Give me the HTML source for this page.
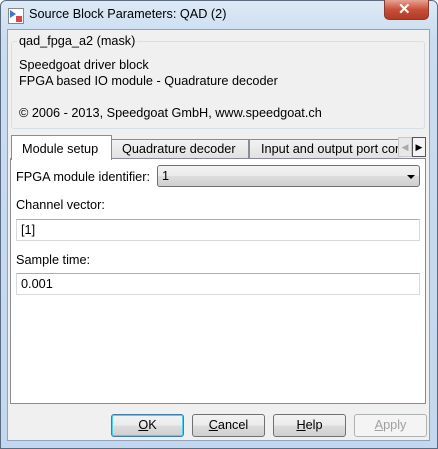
<!DOCTYPE html><html><head><style>
*{margin:0;padding:0;box-sizing:border-box}
body{width:438px;height:449px;overflow:hidden;background:#fff;font-family:"Liberation Sans",sans-serif;font-size:12.7px;color:#000;position:relative}
.win{position:absolute;left:0;top:0;width:438px;height:449px;border:1px solid #5b6b80;border-radius:6px 6px 0 0;background:linear-gradient(#dde9f6,#c9dcf0 40px,#c3d7ee)}
.client{position:absolute;left:7px;top:29px;width:423px;height:412px;background:#f0f0f0;border:1px solid #8fa3bc}
.abs{position:absolute}
.t{position:absolute;white-space:nowrap}
.btn{position:absolute;top:414px;width:73px;height:23px;border:1px solid #707070;border-radius:3px;background:linear-gradient(#f2f2f2,#ebebeb 50%,#dddddd 51%,#cfcfcf);text-align:center;line-height:21px}
.inp{position:absolute;left:16px;width:404px;height:22px;border:1px solid #d9d9d9;border-top-color:#abadb3;background:#fff;padding-left:4px;line-height:20px}
</style></head><body>
<div class="win"></div>
<div class="abs" style="left:8px;top:8px;width:16px;height:16px;border:1px solid #888;background:#fff"></div>
<div class="abs" style="left:10px;top:10px;width:0;height:0;border-left:6px solid #3a7cc7;border-top:4px solid transparent;border-bottom:4px solid transparent"></div>
<div class="abs" style="left:16px;top:16px;width:6px;height:6px;background:#d44"></div>
<div class="t" style="left:29px;top:7px">Source Block Parameters: QAD (2)</div>
<div class="abs" style="left:384px;top:0;width:45px;height:20px;border:1px solid #8a3b30;border-top:none;border-radius:0 0 5px 5px;background:linear-gradient(#e8a393,#c7503a 50%,#b33a22)"></div>
<div class="t" style="left:398px;top:0;color:#fff;font-weight:bold;font-size:15px">✕</div>
<div class="client"></div>
<div class="abs" style="left:11px;top:41px;width:414px;height:88px;border:1px solid #d5dfe5;border-radius:3px"></div>
<div class="t" style="left:17px;top:34px;background:#f0f0f0;padding:0 2px">qad_fpga_a2 (mask)</div>
<div class="t" style="left:19px;top:58px">Speedgoat driver block</div>
<div class="t" style="left:19px;top:74px">FPGA based IO module - Quadrature decoder</div>
<div class="t" style="left:19px;top:106px">© 2006 - 2013, Speedgoat GmbH, www.speedgoat.ch</div>
<div class="abs" style="left:10px;top:158px;width:416px;height:246px;background:#fff;border:1px solid #898c95"></div>
<div class="abs" style="left:111px;top:139px;width:138px;height:20px;border:1px solid #898c95;background:linear-gradient(#f2f2f2,#e1e1e1)"></div>
<div class="t" style="left:122px;top:142px">Quadrature decoder</div>
<div class="abs" style="left:249px;top:139px;width:152px;height:20px;border:1px solid #898c95;border-right:none;background:linear-gradient(#f2f2f2,#e1e1e1);overflow:hidden"><span class="t" style="left:11px;top:2px">Input and output port conf</span></div>
<div class="abs" style="left:398px;top:137px;width:14px;height:20px;background:#e8e8e8;border:1px solid #c8c8c8;color:#aaa;font-size:9px;text-align:center;line-height:18px">◀</div>
<div class="abs" style="left:412px;top:137px;width:14px;height:20px;background:#f4f4f4;border:1px solid #555;font-size:9px;text-align:center;line-height:18px">▶</div>
<div class="abs" style="left:11px;top:135px;width:101px;height:25px;border:1px solid #898c95;border-bottom:none;background:#fff"></div>
<div class="t" style="left:22px;top:142px">Module setup</div>
<div class="t" style="left:16px;top:170px">FPGA module identifier:</div>
<div class="abs" style="left:157px;top:165px;width:263px;height:22px;border:1px solid #707070;border-radius:3px;background:linear-gradient(#f2f2f2,#ebebeb 50%,#dddddd 51%,#cfcfcf)"></div>
<div class="t" style="left:162px;top:169px">1</div>
<div class="abs" style="left:407px;top:175px;width:0;height:0;border-top:4px solid #000;border-left:4px solid transparent;border-right:4px solid transparent"></div>
<div class="t" style="left:16px;top:198px">Channel vector:</div>
<div class="inp" style="top:219px">[1]</div>
<div class="t" style="left:16px;top:253px">Sample time:</div>
<div class="inp" style="top:273px">0.001</div>
<div class="btn" style="left:111px;border-color:#3c7fb1;box-shadow:inset 0 0 0 1px #48d2f8"><u>O</u>K</div>
<div class="btn" style="left:192px"><u>C</u>ancel</div>
<div class="btn" style="left:273px"><u>H</u>elp</div>
<div class="btn" style="left:354px;border-color:#adb2b5;background:#f4f4f4;color:#a0a0a0"><u>A</u>pply</div>
</body></html>
